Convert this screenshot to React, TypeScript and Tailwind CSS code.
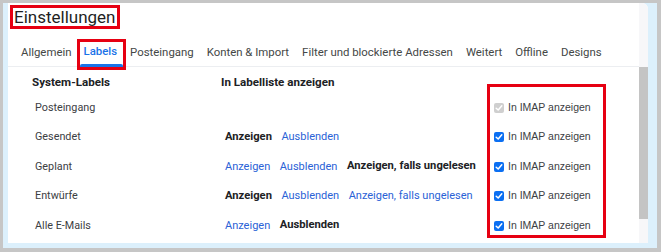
const tabs = ["Allgemein", "Labels", "Posteingang", "Konten & Import", "Filter und blockierte Adressen", "Weitert", "Offline", "Designs"];

type Action = { text: string; bold?: boolean };

const rows: { name: string; actions: Action[]; locked?: boolean }[] = [
  { name: "Posteingang", actions: [], locked: true },
  { name: "Gesendet", actions: [{ text: "Anzeigen", bold: true }, { text: "Ausblenden" }] },
  {
    name: "Geplant",
    actions: [{ text: "Anzeigen" }, { text: "Ausblenden" }, { text: "Anzeigen, falls ungelesen", bold: true }],
  },
  {
    name: "Entwürfe",
    actions: [{ text: "Anzeigen", bold: true }, { text: "Ausblenden" }, { text: "Anzeigen, falls ungelesen" }],
  },
  { name: "Alle E-Mails", actions: [{ text: "Anzeigen" }, { text: "Ausblenden", bold: true }] },
];

function Check({ disabled }: { disabled?: boolean }) {
  return (
    <span
      className={`flex justify-center items-center w-[10px] h-[10px] rounded-[2px] ${
        disabled ? "bg-[#cfcfcf]" : "bg-[#0b6ff2]"
      }`}
    >
      <svg width="8" height="8" viewBox="0 0 8 8" fill="none">
        <path d="M1.2 4.2 L3.2 6 L6.8 1.8" stroke="white" strokeWidth="1.5" strokeLinecap="round" strokeLinejoin="round" />
      </svg>
    </span>
  );
}

export default function App() {
  return (
    <div className="flex w-[661px] h-[252px] bg-[#c6c6c6] pt-[3px] pl-[3px] pr-[4px] pb-[4px] font-['Roboto',sans-serif]">
      <div className="flex flex-1 bg-[#dcf0fc] pl-[5px] pr-[9px] pb-[5px]">
        <div className="flex flex-1 bg-white rounded-tr-[6px] overflow-hidden">
          <div className="flex flex-col flex-1">
            {/* Titel */}
            <div className="self-start flex items-center h-[24px] mt-[2px] ml-[2px] px-[1px] border-[3px] border-[#e60012]">
              <span className="text-[17px] leading-none text-[#1f1f1f]">Einstellungen</span>
            </div>

            {/* Tabs */}
            <div className="flex items-start h-[28px] mt-[10px] pl-[13px] gap-[13px] border-b border-[#eceef1] text-[11.4px] text-[#444746]">
              {tabs.map((t) =>
                t === "Labels" ? (
                  <div
                    key={t}
                    className="flex flex-col h-[31px] -ml-[8px] -mr-[9px] border-[3px] border-[#e60012]"
                  >
                    <span className="flex items-center h-[20px] pl-[4px] pr-[6px] text-[#1a73e8] font-medium">
                      {t}
                    </span>
                    <span className="flex-1" />
                    <span className="h-[3px] bg-[#1a73e8] rounded-t-[2px]" />
                  </div>
                ) : (
                  <span key={t} className="flex items-center h-[27px] whitespace-nowrap">
                    {t}
                  </span>
                )
              )}
            </div>

            {/* Tabelle */}
            <div className="flex">
              <div className="flex flex-col w-[213px] pl-[24px]">
                <div className="flex items-center h-[26px] pt-[6px] text-[11.6px] font-bold text-[#202124]">
                  System-Labels
                </div>
                {rows.map((r) => (
                  <div key={r.name} className="flex items-center h-[29.5px] pl-[3px] text-[10.8px] text-[#3c4043]">
                    {r.name}
                  </div>
                ))}
              </div>

              <div className="flex flex-col w-[266px]">
                <div className="flex items-center h-[26px] pt-[6px] text-[11.6px] font-bold text-[#202124]">
                  In Labelliste anzeigen
                </div>
                {rows.map((r) => (
                  <div key={r.name} className="flex items-center h-[29.5px] pl-[4px] gap-[9.5px] whitespace-nowrap">
                    {r.actions.map((a) => (
                      <span
                        key={a.text}
                        className={
                          a.bold ? "text-[11.2px] font-bold text-[#202124]" : "text-[11px] text-[#2a62d6]"
                        }
                      >
                        {a.text}
                      </span>
                    ))}
                  </div>
                ))}
              </div>

              <div className="flex flex-col w-[119px] h-[154px] mt-[17px] pt-[6px] pl-[4px] border-[3px] border-[#e60012]">
                {rows.map((r) => (
                  <div
                    key={r.name}
                    className="flex items-center shrink-0 h-[29.5px] gap-[4px] text-[10.5px] text-[#3c4043] font-['Liberation_Sans',Arial,sans-serif] whitespace-nowrap"
                  >
                    <Check disabled={r.locked} />
                    <span>In IMAP anzeigen</span>
                  </div>
                ))}
              </div>
            </div>
          </div>

          {/* Scrollleiste */}
          <div className="w-[9px] bg-[#f7f7f9]">
            <div className="mt-[64px] h-[152px] bg-[#c4c4c4]" />
          </div>
        </div>
      </div>
    </div>
  );
}
